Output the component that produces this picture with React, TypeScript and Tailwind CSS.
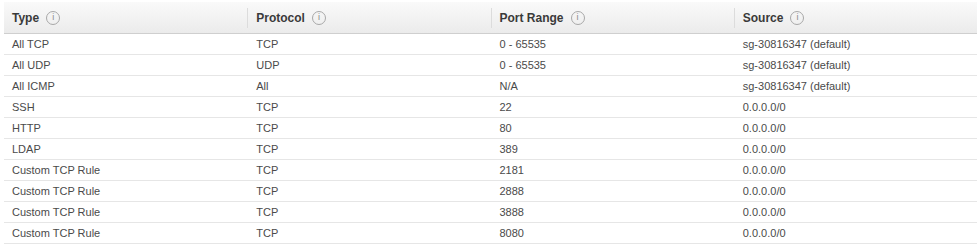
import React from "react";

const COLUMNS = ["Type", "Protocol", "Port Range", "Source"];

const ROWS: [string, string, string, string][] = [
  ["All TCP", "TCP", "0 - 65535", "sg-30816347 (default)"],
  ["All UDP", "UDP", "0 - 65535", "sg-30816347 (default)"],
  ["All ICMP", "All", "N/A", "sg-30816347 (default)"],
  ["SSH", "TCP", "22", "0.0.0.0/0"],
  ["HTTP", "TCP", "80", "0.0.0.0/0"],
  ["LDAP", "TCP", "389", "0.0.0.0/0"],
  ["Custom TCP Rule", "TCP", "2181", "0.0.0.0/0"],
  ["Custom TCP Rule", "TCP", "2888", "0.0.0.0/0"],
  ["Custom TCP Rule", "TCP", "3888", "0.0.0.0/0"],
  ["Custom TCP Rule", "TCP", "8080", "0.0.0.0/0"],
];

function InfoIcon() {
  return (
    <span className="ml-[7px] inline-flex h-[14px] w-[14px] items-center justify-center rounded-full border border-[#a8a8a8] text-[9px] font-normal leading-none text-[#888]">
      i
    </span>
  );
}

export default function App() {
  return (
    <div
      className="bg-white pl-[4px] pt-[2px]"
      style={{ fontFamily: '"Liberation Sans", Arial, sans-serif' }}
    >
      <div className="w-[973px]">
        {/* header */}
        <div className="grid h-[32px] grid-cols-4 border-b border-[#cfcfcf] bg-gradient-to-b from-[#fafafa] to-[#ebebeb]">
          {COLUMNS.map((c, i) => (
            <div key={c} className="flex items-center">
              {i > 0 && <div className="h-[20px] w-px bg-[#dcdcdc]" />}
              <div className="flex items-center pl-[8px] text-[12px] font-bold text-[#3a3a3a]">
                {c}
                <InfoIcon />
              </div>
            </div>
          ))}
        </div>
        {/* rows */}
        {ROWS.map((r, i) => (
          <div key={i} className="grid h-[21px] grid-cols-4 border-b border-[#e6e6e6] text-[11px] text-[#4a4a4a]">
            {r.map((cell, j) => (
              <div key={j} className={j === 0 ? "flex items-center pl-[8px] pt-[1px]" : "flex items-center pl-[9px] pt-[1px]"}>
                {cell}
              </div>
            ))}
          </div>
        ))}
      </div>
    </div>
  );
}
